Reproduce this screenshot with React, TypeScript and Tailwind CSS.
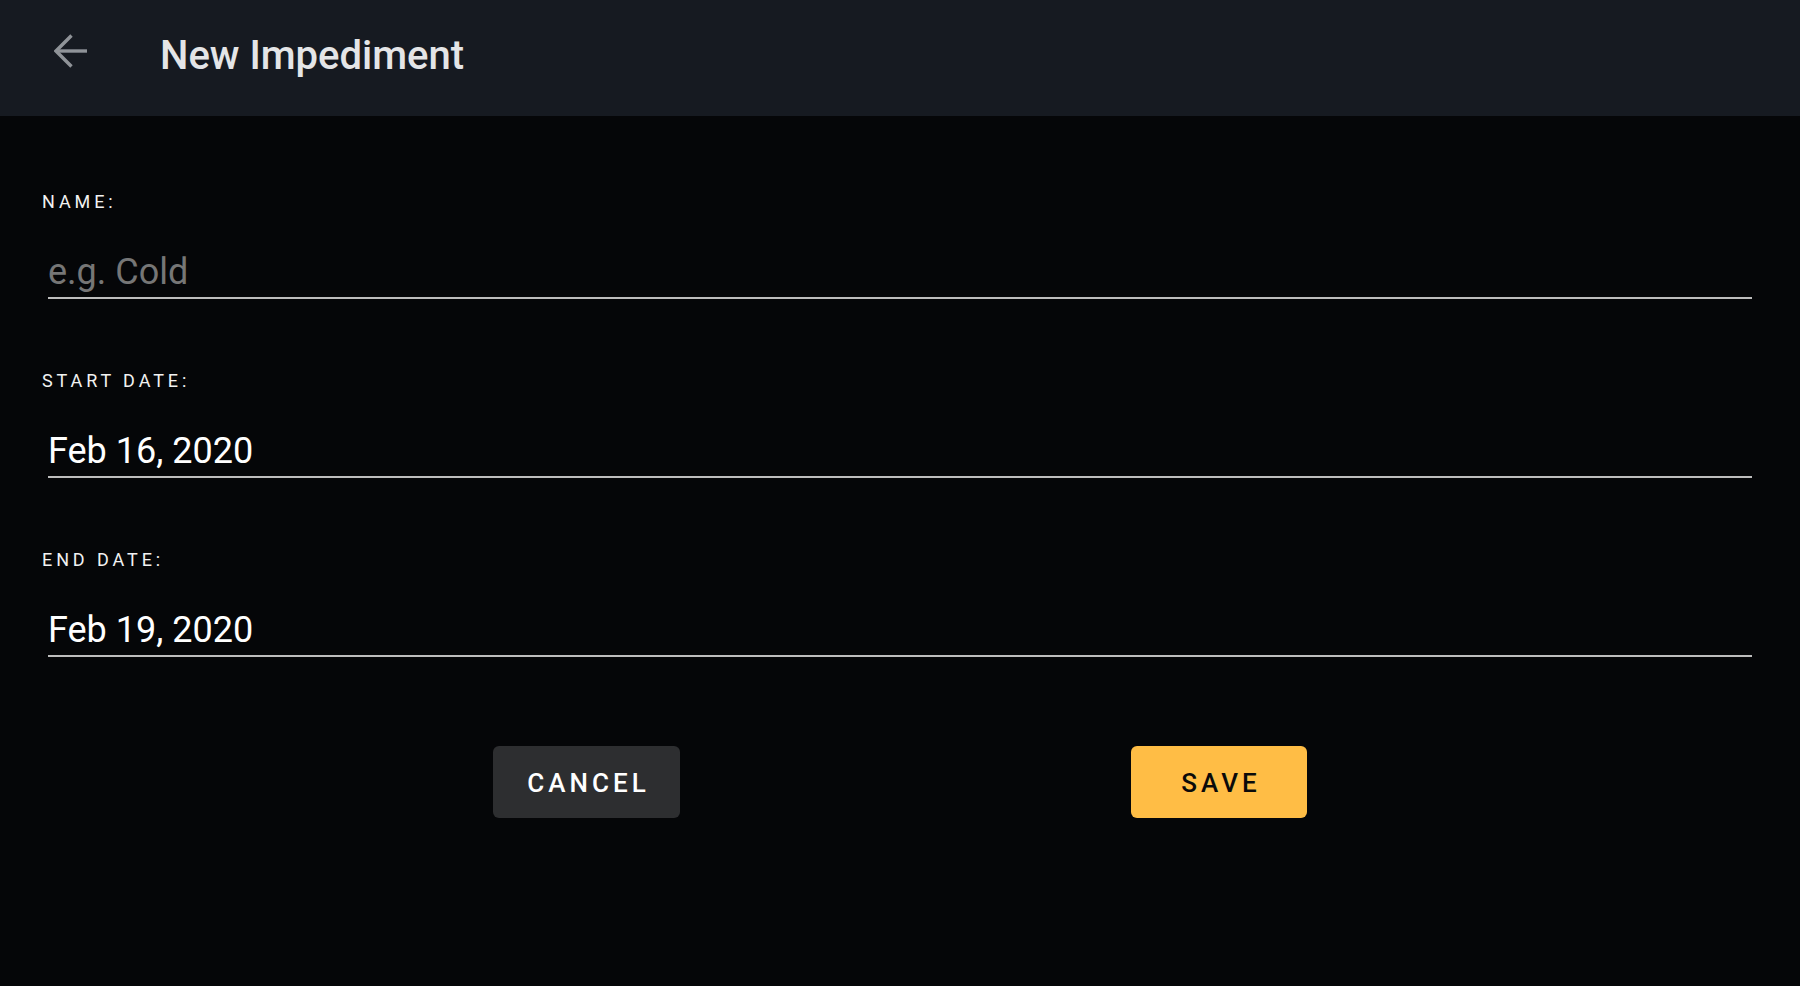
import React from "react";

function Field({ label, value, placeholder }: { label: string; value?: string; placeholder?: string }) {
  return (
    <div className="flex flex-col">
      <div className="text-[18px] leading-none tracking-[3.9px] text-[#f2f2f2] h-[18px]">{label}</div>
      <div className="mt-[43px] mx-[6px] border-b-2 border-[#bdbdbd] pb-[7px]">
        {value ? (
          <div className="text-[36px] leading-none h-[36px] text-white">{value}</div>
        ) : (
          <div className="text-[36px] leading-none h-[36px] text-[#767676]">{placeholder}</div>
        )}
      </div>
    </div>
  );
}

export default function App() {
  return (
    <div
      className="min-h-screen w-full bg-[#050608] flex flex-col"
      style={{ fontFamily: "Roboto, 'Noto Sans', sans-serif" }}
    >
      <header className="h-[116px] bg-[#161a21] flex items-start shrink-0">
        <div className="ml-[54px] mt-[34px] w-[34px] h-[34px]">
          <svg width="34" height="34" viewBox="0 0 34 34" fill="none">
            <path d="M2 17H33" stroke="#8f9398" strokeWidth="3.4" strokeLinecap="butt" />
            <path d="M17.5 1.5L2 17L17.5 32.5" stroke="#8f9398" strokeWidth="3.4" strokeLinecap="butt" strokeLinejoin="miter" />
          </svg>
        </div>
        <h1 className="ml-[72px] mt-[36px] text-[40px] leading-none font-medium text-[#e4e5e7]">New Impediment</h1>
      </header>

      <main className="px-[42px] pt-[77px] flex flex-col gap-[73px]">
        <Field label="NAME:" placeholder="e.g. Cold" />
        <Field label="START DATE:" value="Feb 16, 2020" />
        <Field label="END DATE:" value="Feb 19, 2020" />
      </main>

      <div className="px-[42px] mt-[89px] flex justify-evenly">
        <button className="w-[187px] h-[72px] rounded-[6px] bg-[#2d2e30] text-white text-[26px] font-medium tracking-[4px] pl-[4px] pt-[2px] flex items-center justify-center">
          CANCEL
        </button>
        <button className="w-[176px] h-[72px] rounded-[6px] bg-[#ffbd45] text-[#0a0a0a] text-[26px] font-medium tracking-[4px] pl-[4px] pt-[2px] flex items-center justify-center">
          SAVE
        </button>
      </div>
    </div>
  );
}
